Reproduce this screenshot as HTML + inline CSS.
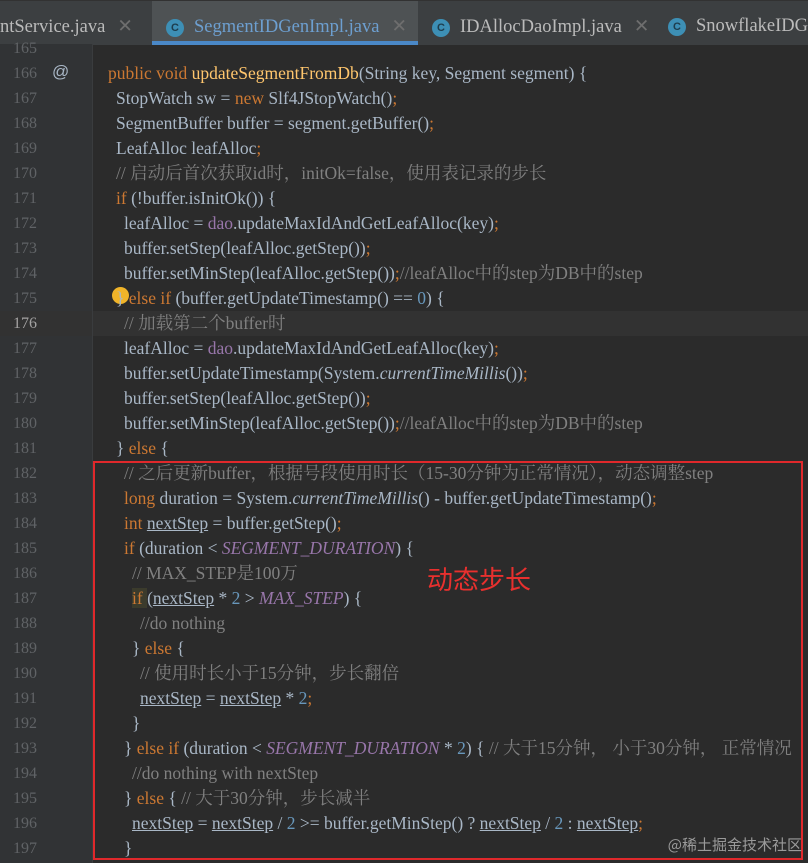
<!DOCTYPE html>
<html><head><meta charset="utf-8"><style>
body{margin:0;width:808px;height:863px;overflow:hidden;background:#2b2b2b;font-family:"Liberation Serif","Noto Serif CJK SC","Noto Sans CJK SC",serif;position:relative}
.tabs{position:absolute;left:0;top:0;width:808px;height:44px;background:#3c3f41;border-top:1px solid #323232}
.tab{position:absolute;top:0;height:44px;line-height:50px;font-size:18.5px;color:#bbbbbb;white-space:nowrap}
.tab .c{display:inline-block;width:18px;height:18px;border-radius:50%;background:#3d8fb5;color:#1d3d4d;font:bold 11px/18px "Liberation Sans",sans-serif;text-align:center;vertical-align:1px;margin-right:10px}
.x{color:#6e6e6e;margin-left:12px;font-family:"Liberation Sans",sans-serif}
.gutter{position:absolute;left:0;top:44px;width:92px;height:819px;background:#313335}
.fold{position:absolute;left:92px;top:44px;width:1px;height:819px;background:#3a3c3e}
.ln{position:absolute;left:0;width:37px;text-align:right;font-size:16px;color:#606366}
.l{position:absolute;white-space:pre;font-size:17.5px;color:#a9b7c6;height:25px;line-height:25px}
.ln{height:25px;line-height:25px}
.k{color:#cc7832}.m{color:#ffc66d}.c{color:#808080}.f{color:#9876aa}.n{color:#6897bb}.i{color:#9876aa;font-style:italic}.it{font-style:italic}.u{text-decoration:underline}
.cur{position:absolute;left:0;top:311px;width:808px;height:25px;background:#323232}
.box{position:absolute;left:93px;top:461px;width:706px;height:395px;border:2px solid #e0282b}
.red{position:absolute;left:427px;top:560px;font:26px "Noto Sans CJK SC",sans-serif;color:#e8302e}
.wm{position:absolute;right:6px;top:834px;font:15px "Noto Sans CJK SC",sans-serif;color:#9a9a9a}
</style></head><body>
<div class="tabs">
<div class="tab" style="left:0">ntService.java<span class="x">✕</span></div>
<div class="tab" style="left:152px;width:266px;background:#4e5254;padding-left:14px;box-sizing:border-box;color:#6d9fd0"><span class="c">C</span>SegmentIDGenImpl.java<span class="x">✕</span><div style="position:absolute;left:0;bottom:0;width:266px;height:4px;background:#4a88c7"></div></div>
<div class="tab" style="left:432px"><span class="c">C</span>IDAllocDaoImpl.java<span class="x">✕</span></div>
<div class="tab" style="left:668px"><span class="c">C</span>SnowflakeIDGen</div>
</div>
<div class="gutter"></div><div class="cur"></div><div class="fold"></div>
<div style="position:absolute;left:52px;top:62px;color:#a9b7c6;font:17px 'Liberation Sans',sans-serif">@</div>
<div style="position:absolute;left:112px;top:287px;width:17px;height:17px;border-radius:50%;background:#f0b429"></div>
<div id="c"></div>
<div class="box"></div>
<div class="red">动态步长</div>
<div class="wm">@稀土掘金技术社区</div>
<script>
var L=[
[165,0,''],
[166,108,'<span class="k">public void </span><span class="m">updateSegmentFromDb</span>(String key, Segment segment) {'],
[167,116,'StopWatch sw = <span class="k">new </span>Slf4JStopWatch()<span class="k">;</span>'],
[168,116,'SegmentBuffer buffer = segment.getBuffer()<span class="k">;</span>'],
[169,116,'LeafAlloc leafAlloc<span class="k">;</span>'],
[170,116,'<span class="c">// 启动后首次获取id时，initOk=false，使用表记录的步长</span>'],
[171,116,'<span class="k">if </span>(!buffer.isInitOk()) {'],
[172,124,'leafAlloc = <span class="f">dao</span>.updateMaxIdAndGetLeafAlloc(key)<span class="k">;</span>'],
[173,124,'buffer.setStep(leafAlloc.getStep())<span class="k">;</span>'],
[174,124,'buffer.setMinStep(leafAlloc.getStep())<span class="k">;</span><span class="c">//leafAlloc中的step为DB中的step</span>'],
[175,116,'} <span class="k">else if </span>(buffer.getUpdateTimestamp() == <span class="n">0</span>) {'],
[176,124,'<span class="c">// 加载第二个buffer时</span>'],
[177,124,'leafAlloc = <span class="f">dao</span>.updateMaxIdAndGetLeafAlloc(key)<span class="k">;</span>'],
[178,124,'buffer.setUpdateTimestamp(System.<span class="it">currentTimeMillis</span>())<span class="k">;</span>'],
[179,124,'buffer.setStep(leafAlloc.getStep())<span class="k">;</span>'],
[180,124,'buffer.setMinStep(leafAlloc.getStep())<span class="k">;</span><span class="c">//leafAlloc中的step为DB中的step</span>'],
[181,116,'} <span class="k">else </span>{'],
[182,124,'<span class="c">// 之后更新buffer，根据号段使用时长（15-30分钟为正常情况），动态调整step</span>'],
[183,124,'<span class="k">long </span>duration = System.<span class="it">currentTimeMillis</span>() - buffer.getUpdateTimestamp()<span class="k">;</span>'],
[184,124,'<span class="k">int </span><span class="u">nextStep</span> = buffer.getStep()<span class="k">;</span>'],
[185,124,'<span class="k">if </span>(duration &lt; <span class="i">SEGMENT_DURATION</span>) {'],
[186,132,'<span class="c">// MAX_STEP是100万</span>'],
[187,132,'<span class="k" style="background:#3b3b2c">if </span>(<span class="u">nextStep</span> * <span class="n">2 </span>&gt; <span class="i">MAX_STEP</span>) {'],
[188,140,'<span class="c">//do nothing</span>'],
[189,132,'} <span class="k">else </span>{'],
[190,140,'<span class="c">// 使用时长小于15分钟，步长翻倍</span>'],
[191,140,'<span class="u">nextStep</span> = <span class="u">nextStep</span> * <span class="n">2</span><span class="k">;</span>'],
[192,132,'}'],
[193,124,'} <span class="k">else if </span>(duration &lt; <span class="i">SEGMENT_DURATION</span> * <span class="n">2</span>) { <span class="c">// 大于15分钟， 小于30分钟， 正常情况</span>'],
[194,132,'<span class="c">//do nothing with nextStep</span>'],
[195,124,'} <span class="k">else </span>{ <span class="c">// 大于30分钟，步长减半</span>'],
[196,132,'<span class="u">nextStep</span> = <span class="u">nextStep</span> / <span class="n">2 </span>&gt;= buffer.getMinStep() ? <span class="u">nextStep</span> / <span class="n">2 </span>: <span class="u">nextStep</span><span class="k">;</span>'],
[197,124,'}']
];
var h='';
L.forEach(function(r,j){var t=36+j*25;
h+='<div class="ln" style="top:'+t+'px'+(r[0]==176?';color:#a4a3a3':'')+'">'+r[0]+'</div>';
h+='<div class="l" style="top:'+t+'px;left:'+r[1]+'px">'+r[2]+'</div>';});
document.getElementById('c').innerHTML=h;
</script>
</body></html>
